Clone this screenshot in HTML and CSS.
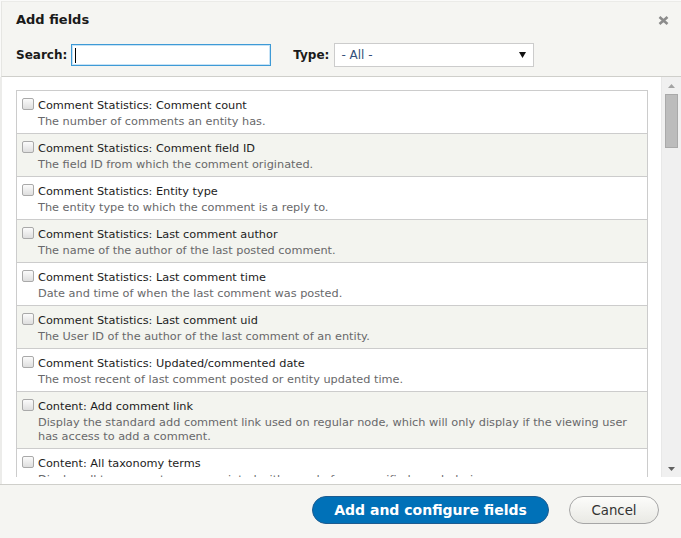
FILE: index.html
```html
<!DOCTYPE html>
<html lang="en">
<head>
<meta charset="utf-8">
<title>Add fields</title>
<link rel="stylesheet" href="styles.css">
</head>
<body>
<div class="dialog">
  <header class="head">
    <div class="titlebar">
      <h1 class="title">Add fields</h1>
      <span class="close" aria-label="Close">
        <svg width="11" height="9" viewBox="0 0 11 9"><path d="M1.5 1 L9.5 8 M9.5 1 L1.5 8" stroke="#8c8c8c" stroke-width="2.6" stroke-linecap="butt"/></svg>
      </span>
    </div>
    <div class="filters">
      <span class="flabel">Search:</span>
      <div class="search"><span class="caretline"></span></div>
      <span class="flabel type">Type:</span>
      <div class="select">
        <span class="selval">- All -</span>
        <svg class="arrow" width="7" height="6" viewBox="0 0 7 6"><path d="M0 0 H7 L3.5 6 Z" fill="#111"/></svg>
      </div>
    </div>
  </header>
  <main class="body">
    <div class="scroller">
      <div class="listwrap">
        <ul class="list">
          <li class="row"><span class="cb"></span><div class="txt"><div class="lbl">Comment Statistics: Comment count</div><div class="desc">The number of comments an entity has.</div></div></li>
          <li class="row alt"><span class="cb"></span><div class="txt"><div class="lbl">Comment Statistics: Comment field ID</div><div class="desc">The field ID from which the comment originated.</div></div></li>
          <li class="row"><span class="cb"></span><div class="txt"><div class="lbl">Comment Statistics: Entity type</div><div class="desc">The entity type to which the comment is a reply to.</div></div></li>
          <li class="row alt"><span class="cb"></span><div class="txt"><div class="lbl">Comment Statistics: Last comment author</div><div class="desc">The name of the author of the last posted comment.</div></div></li>
          <li class="row"><span class="cb"></span><div class="txt"><div class="lbl">Comment Statistics: Last comment time</div><div class="desc">Date and time of when the last comment was posted.</div></div></li>
          <li class="row alt"><span class="cb"></span><div class="txt"><div class="lbl">Comment Statistics: Last comment uid</div><div class="desc">The User ID of the author of the last comment of an entity.</div></div></li>
          <li class="row"><span class="cb"></span><div class="txt"><div class="lbl">Comment Statistics: Updated/commented date</div><div class="desc">The most recent of last comment posted or entity updated time.</div></div></li>
          <li class="row alt"><span class="cb"></span><div class="txt"><div class="lbl">Content: Add comment link</div><div class="desc">Display the standard add comment link used on regular node, which will only display if the viewing user has access to add a comment.</div></div></li>
          <li class="row"><span class="cb"></span><div class="txt"><div class="lbl">Content: All taxonomy terms</div><div class="desc">Display all taxonomy terms associated with a node from specified vocabularies.</div></div></li>
        </ul>
      </div>
      <div class="scrollbar">
        <div class="sbtn"><svg width="7" height="4" viewBox="0 0 7 4"><path d="M0 4 L3.5 0 L7 4 Z" fill="#a3a3a3"/></svg></div>
        <div class="thumb"></div>
        <div class="track"></div>
        <div class="sbtn down"><svg width="7" height="4" viewBox="0 0 7 4"><path d="M0 0 L7 0 L3.5 4 Z" fill="#606060"/></svg></div>
      </div>
    </div>
  </main>
  <footer class="foot">
    <button class="btn primary">Add and configure fields</button>
    <button class="btn">Cancel</button>
  </footer>
</div>
</body>
</html>
```

FILE: styles.css
```css
* { box-sizing: border-box; }
html, body { margin: 0; padding: 0; }
body {
  width: 681px;
  height: 538px;
  overflow: hidden;
  background: #fafaf9;
  font-family: "DejaVu Sans", Verdana, sans-serif;
  color: #222;
}
.dialog {
  display: flex;
  flex-direction: column;
  height: 538px;
}
.head {
  background: #f5f5f2;
  border-bottom: 1px solid #cfcfcb;
  height: 76px;
  margin: 1px 0 0 1px;
  border-left: 1px solid #e6e6e3;
  border-top: 1px solid #ebebe8;
}
.titlebar {
  display: flex;
  align-items: center;
  justify-content: space-between;
  height: 36px;
  padding: 0 12px 0 14px;
}
.title {
  margin: 0;
  font-size: 13px;
  font-weight: bold;
  line-height: 18px;
  color: #1a1a1a;
}
.close { display: flex; width: 11px; height: 9px; }
.filters {
  display: flex;
  align-items: center;
  height: 36px;
  padding: 0 0 2px 14px;
}
.flabel {
  font-size: 12px;
  font-weight: bold;
  color: #1a1a1a;
  margin-right: 4px;
}
.flabel.type { margin-left: 22px; margin-right: 5px; }
.search {
  width: 200px;
  height: 22px;
  background: #fff;
  border: 1px solid #3e9ad6;
  box-shadow: inset 0 0 0 1px #c7e3f6;
  display: flex;
  align-items: center;
  padding-left: 3px;
}
.caretline { width: 1px; height: 15px; background: #000; }
.select {
  width: 200px;
  height: 24px;
  background: #fff;
  border: 1px solid #cccccc;
  display: flex;
  align-items: center;
  justify-content: space-between;
  padding: 0 7px 0 6px;
}
.selval { font-size: 12px; color: #34507a; }
.arrow { display: block; }
.body {
  height: 407px;
  background: #fff;
  border-left: 2px solid #ececea;
  padding-bottom: 7px;
}
.scroller {
  display: flex;
  height: 400px;
}
.listwrap {
  flex: 1;
  overflow: hidden;
  padding: 13px 13px 0 14px;
}
.list {
  list-style: none;
  margin: 0;
  padding: 0;
  border: 1px solid #cccccc;
  border-bottom: 0;
}
.row {
  display: flex;
  align-items: flex-start;
  padding: 6px 8px 4px 5px;
  border-bottom: 1px solid #cccccc;
  background: #fff;
}
.row.alt { background: #f3f4ef; }
.cb {
  flex: none;
  width: 12px;
  height: 12px;
  margin: 1px 4px 0 0;
  border: 1px solid #a9a9a9;
  border-radius: 2px;
  background: linear-gradient(#fbfbfb, #dedede);
}
.txt { flex: 1; }
.lbl {
  font-size: 11.3px;
  line-height: 18px;
  color: #1c1c1c;
}
.desc {
  font-size: 11.3px;
  line-height: 14px;
  color: #68686a;
}
.scrollbar {
  width: 20px;
  flex: none;
  background: #f0f0f0;
  display: flex;
  flex-direction: column;
  align-items: center;
  border-left: 1px solid #e8e8e8;
}
.sbtn {
  height: 17px;
  width: 100%;
  display: flex;
  align-items: center;
  justify-content: center;
}
.thumb {
  width: 13px;
  height: 54px;
  background: #bcbcbc;
  border: 1px solid #a9a9a9;
}
.track { flex: 1; }
.foot {
  flex: 1;
  background: #f5f5f2;
  border-top: 1px solid #cfcfcb;
  display: flex;
  justify-content: flex-end;
  align-items: flex-start;
  padding: 11px 22px 0 0;
  gap: 20px;
}
.btn {
  font-family: "DejaVu Sans", Verdana, sans-serif;
  height: 28px;
  border-radius: 20px;
  font-size: 13.3px;
  padding: 0 21px;
  border: 1px solid #a6a6a6;
  background: linear-gradient(#fcfcfa, #e9e9e4);
  color: #333;
  width: 90px;
}
.btn.primary {
  width: 237px;
  font-size: 14px;
  font-weight: bold;
  color: #fff;
  background: #0071b8;
  border: 1px solid #1e5c90;
}
```
